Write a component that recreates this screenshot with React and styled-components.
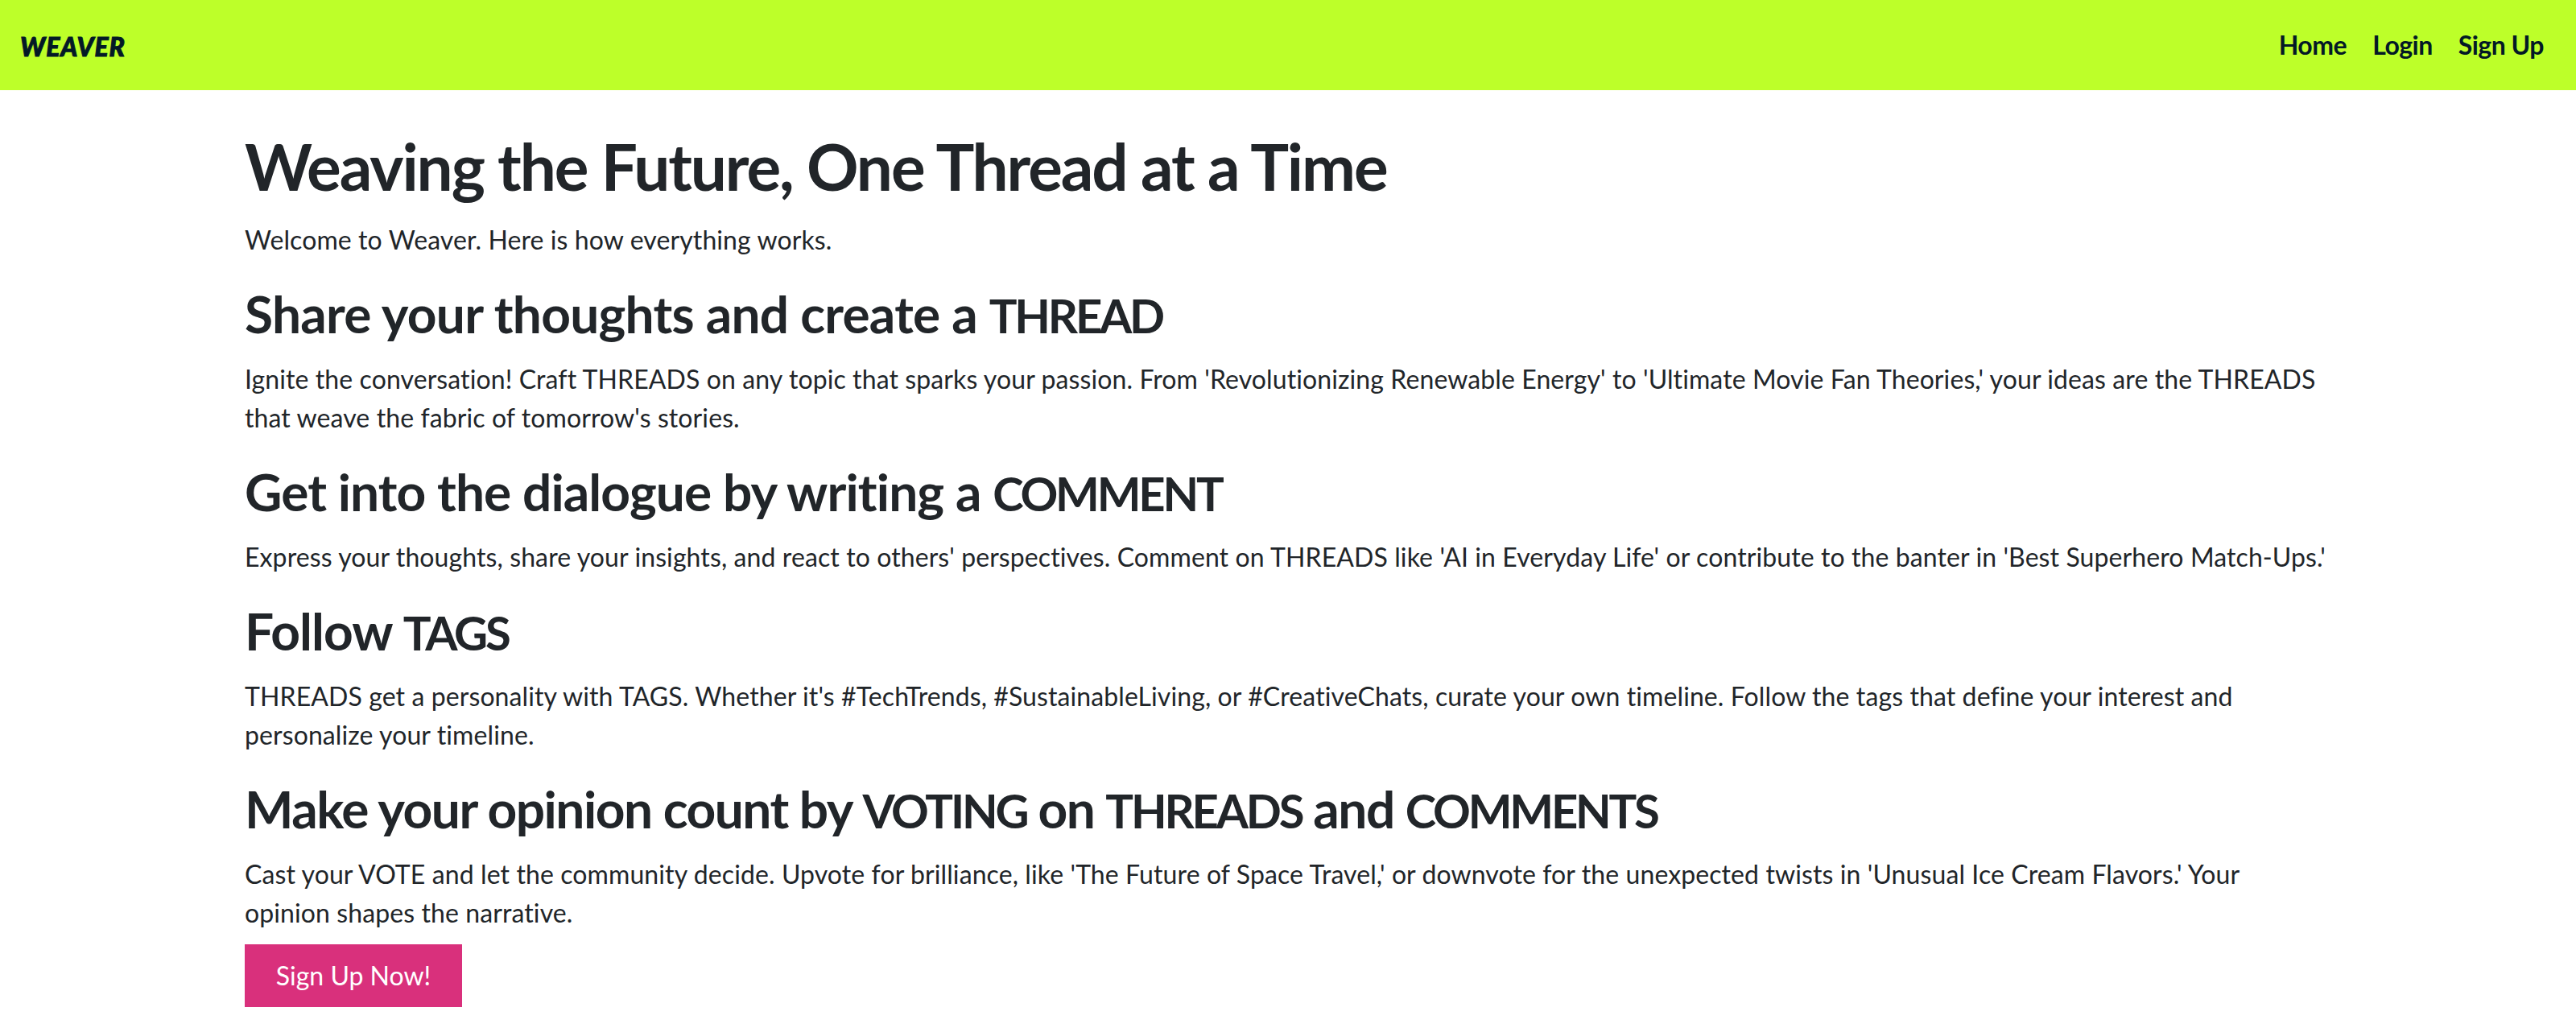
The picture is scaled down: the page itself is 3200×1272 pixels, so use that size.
import styled, { createGlobalStyle } from "styled-components";

const GlobalStyle = createGlobalStyle`
  * {
    box-sizing: border-box;
  }
  body {
    margin: 0;
    background-color: #ffffff;
    color: #212529;
    font-family: Lato, sans-serif;
    font-size: 32px;
    line-height: 48px;
  }
`;

const Navbar = styled.nav`
  display: flex;
  justify-content: space-between;
  align-items: center;
  height: 112px;
  padding: 0 40px 0 25px;
  background-color: #bdff29;
  color: #031926;
`;

const Logo = styled.a`
  padding-top: 4px;
  font-size: 32px;
  font-weight: 900;
  font-style: italic;
  letter-spacing: 1px;
  -webkit-text-stroke: 1px #031926;
`;

const NavLinks = styled.div`
  display: flex;
  gap: 32px;
`;

const NavLink = styled.a`
  font-weight: 700;
  letter-spacing: -0.5px;
`;

const Main = styled.main`
  width: 2616px;
  margin: 0 auto;
  padding: 46px 16px 0 12px;
`;

const Title = styled.h1`
  margin: 0 0 20px;
  font-size: 80px;
  font-weight: 700;
  line-height: 96px;
  letter-spacing: -2.1px;
`;

const Heading = styled.h2`
  margin: 0 0 19px;
  font-size: 64px;
  font-weight: 700;
  line-height: 77px;
  letter-spacing: ${(props) => props.$tracking}px;
`;

// the uppercase words sit narrower than the rest of the heading
const Caps = styled.span`
  font-size: 58px;
  line-height: 0;
  letter-spacing: -3.2px;
`;

const Text = styled.p`
  margin: 0 0 29px;
  letter-spacing: 0.1px;
`;

const Section = styled.section`
  &:last-of-type ${Text} {
    margin-bottom: 15px;
  }
`;

const SignUpButton = styled.button`
  display: block;
  width: 270px;
  height: 78px;
  padding: 0;
  border: none;
  background-color: #d9307c;
  color: #ffffff;
  font-family: inherit;
  font-size: 32px;
  line-height: 48px;
`;

const sections = [
  {
    heading: "Share your thoughts and create a THREAD",
    tracking: -0.75,
    text: "Ignite the conversation! Craft THREADS on any topic that sparks your passion. From 'Revolutionizing Renewable Energy' to 'Ultimate Movie Fan Theories,' your ideas are the THREADS that weave the fabric of tomorrow's stories.",
  },
  {
    heading: "Get into the dialogue by writing a COMMENT",
    tracking: -0.9,
    text: "Express your thoughts, share your insights, and react to others' perspectives. Comment on THREADS like 'AI in Everyday Life' or contribute to the banter in 'Best Superhero Match-Ups.'",
  },
  {
    heading: "Follow TAGS",
    tracking: -1,
    text: "THREADS get a personality with TAGS. Whether it's #TechTrends, #SustainableLiving, or #CreativeChats, curate your own timeline. Follow the tags that define your interest and personalize your timeline.",
  },
  {
    heading: "Make your opinion count by VOTING on THREADS and COMMENTS",
    tracking: -1.5,
    text: "Cast your VOTE and let the community decide. Upvote for brilliance, like 'The Future of Space Travel,' or downvote for the unexpected twists in 'Unusual Ice Cream Flavors.' Your opinion shapes the narrative.",
  },
];

function renderHeading(heading) {
  return heading
    .split(/([A-Z]{2,})/)
    .map((part, i) => (i % 2 ? <Caps key={i}>{part}</Caps> : part));
}

function App() {
  return (
    <>
      <GlobalStyle />
      <Navbar>
        <Logo>WEAVER</Logo>
        <NavLinks>
          <NavLink>Home</NavLink>
          <NavLink>Login</NavLink>
          <NavLink>Sign Up</NavLink>
        </NavLinks>
      </Navbar>
      <Main>
        <Title>Weaving the Future, One Thread at a Time</Title>
        <Text>Welcome to Weaver. Here is how everything works.</Text>
        {sections.map((section) => (
          <Section key={section.heading}>
            <Heading $tracking={section.tracking}>{renderHeading(section.heading)}</Heading>
            <Text>{section.text}</Text>
          </Section>
        ))}
        <SignUpButton>Sign Up Now!</SignUpButton>
      </Main>
    </>
  );
}

export default App;
